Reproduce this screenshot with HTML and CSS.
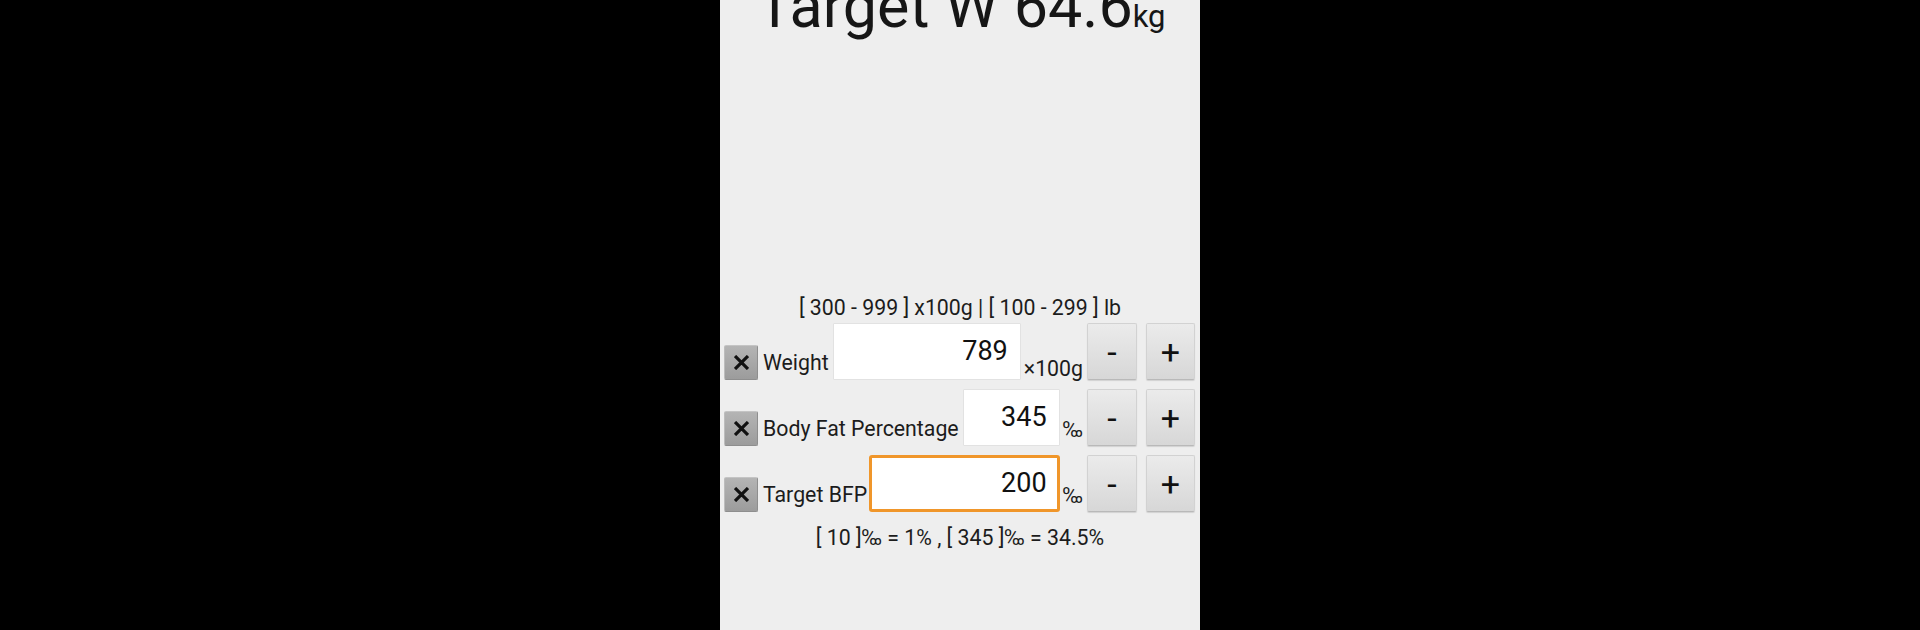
FILE: index.html
```html
<!DOCTYPE html>
<html>
<head>
<meta charset="utf-8">
<link rel="stylesheet" href="styles.css">
</head>
<body>
<div class="screen">
  <div class="title">Target W 64.6<span class="unit">kg</span></div>
  <div class="range">[ 300 - 999 ] x100g | [ 100 - 299 ] lb</div>
  <div class="row">
    <div class="clear"><svg viewBox="0 0 14 14" width="15" height="15"><path d="M2 2L12 12M12 2L2 12" stroke="#111" stroke-width="3" stroke-linecap="square"/></svg></div>
    <div class="label">Weight</div>
    <div class="input">789</div>
    <div class="suffix suffix-g">×100g</div>
    <div class="btn">-</div>
    <div class="btn">+</div>
  </div>
  <div class="row">
    <div class="clear"><svg viewBox="0 0 14 14" width="15" height="15"><path d="M2 2L12 12M12 2L2 12" stroke="#111" stroke-width="3" stroke-linecap="square"/></svg></div>
    <div class="label">Body Fat Percentage</div>
    <div class="input">345</div>
    <div class="suffix suffix-pm">‰</div>
    <div class="btn">-</div>
    <div class="btn">+</div>
  </div>
  <div class="row">
    <div class="clear"><svg viewBox="0 0 14 14" width="15" height="15"><path d="M2 2L12 12M12 2L2 12" stroke="#111" stroke-width="3" stroke-linecap="square"/></svg></div>
    <div class="label">Target BFP</div>
    <div class="input focused">200</div>
    <div class="suffix suffix-pm">‰</div>
    <div class="btn">-</div>
    <div class="btn">+</div>
  </div>
  <div class="note">[ 10 ]‰ = 1% , [ 345 ]‰ = 34.5%</div>
</div>
</body>
</html>
```

FILE: styles.css
```css
html, body {
  margin: 0;
  padding: 0;
  background: #000;
}
.screen {
  width: 480px;
  height: 630px;
  margin: 0 auto;
  background: #eeeeee;
  overflow: hidden;
  font-family: Roboto, "Liberation Sans", sans-serif;
  color: #1c1c1c;
}
.title {
  font-size: 61px;
  line-height: 60px;
  margin-top: -24px;
  text-align: center;
  padding-left: 2px;
  white-space: nowrap;
  color: #161616;
}
.title .unit {
  font-size: 31px;
}
.range {
  margin-top: 249px;
  font-size: 21.3px;
  line-height: 24px;
  text-align: center;
}
.row {
  display: flex;
  align-items: flex-end;
  height: 57px;
  margin-top: 3px;
  padding: 0 5px 0 4px;
}
.row + .row {
  margin-top: 9px;
}
.clear {
  width: 34px;
  height: 35px;
  box-sizing: border-box;
  background: linear-gradient(#b4b4b4, #9c9c9c);
  border: 1px solid #8e8e8e;
  border-top-color: #c4c4c4;
  border-left-color: #bdbdbd;
  border-radius: 2px;
  display: flex;
  align-items: center;
  justify-content: center;
}
.label {
  margin-left: 5px;
  margin-bottom: 5px;
  font-size: 21.3px;
  line-height: 24px;
  white-space: nowrap;
}
.input {
  flex: 1;
  min-width: 0;
  margin-left: 4px;
  height: 57px;
  box-sizing: border-box;
  background: #ffffff;
  border: 1px solid #e2e2e2;
  border-radius: 1px;
  font-size: 27px;
  line-height: 55px;
  text-align: right;
  padding-right: 12px;
  color: #111;
}
.input.focused {
  border: 3px solid #f0962a;
  border-radius: 3px;
  line-height: 51px;
  padding-right: 10px;
  margin-left: 2px;
}
.suffix {
  font-size: 21.3px;
  line-height: 22px;
  margin-left: 3px;
  white-space: nowrap;
}
.suffix-g {
  margin-bottom: 0;
  margin-right: 4px;
}
.suffix-pm {
  margin-bottom: 5px;
  margin-right: 4px;
}
.btn {
  width: 50px;
  height: 57px;
  box-sizing: border-box;
  background: linear-gradient(#ebebeb, #d7d7d7);
  border: 1px solid #d2d2d2;
  border-bottom-color: #b9b9b9;
  border-radius: 2px;
  box-shadow: 0 1px 1px rgba(0, 0, 0, 0.12);
  display: flex;
  align-items: center;
  justify-content: center;
  font-size: 34px;
  color: #111;
}
.btn + .btn {
  margin-left: 9px;
  width: 49px;
}
.note {
  margin-top: 14px;
  font-size: 21.3px;
  line-height: 24px;
  text-align: center;
}
```
